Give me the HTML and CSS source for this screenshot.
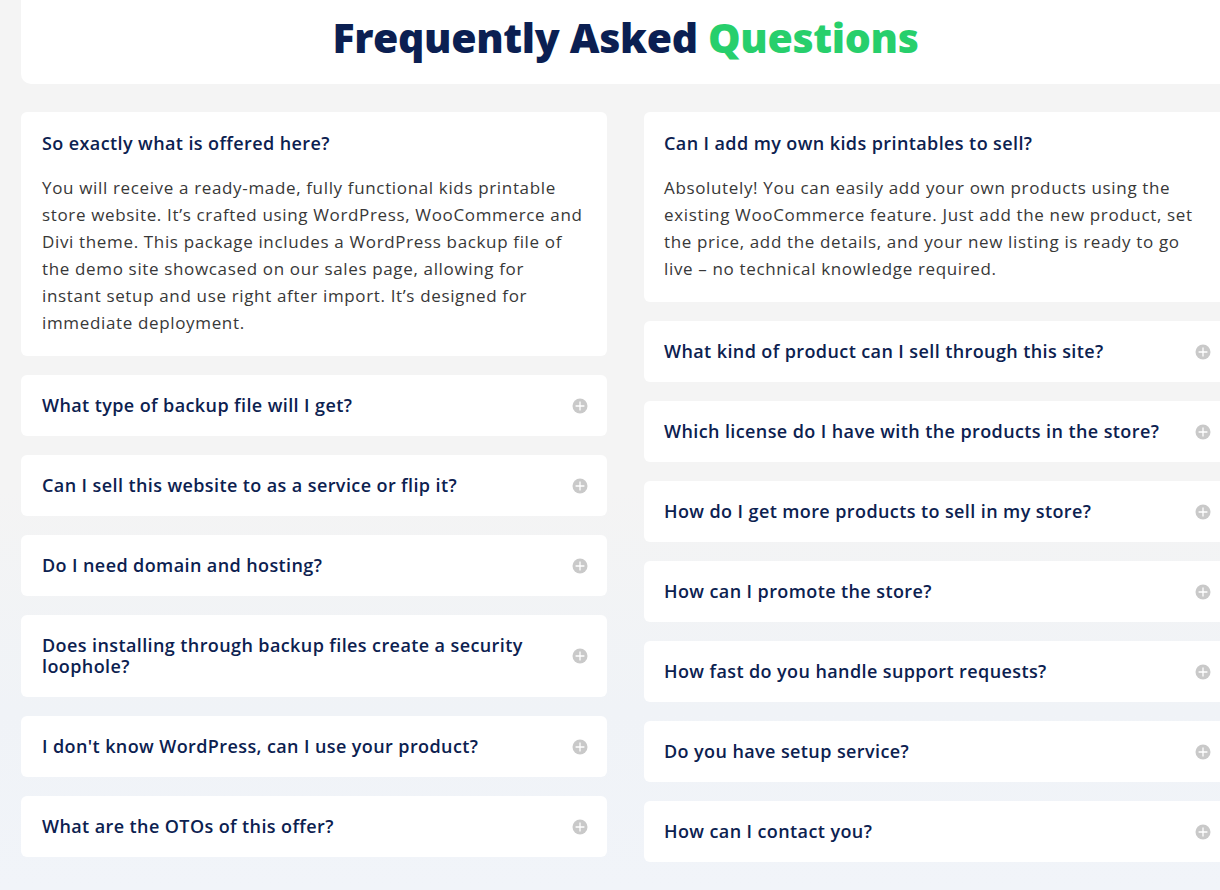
FILE: index.html
```html
<!DOCTYPE html>
<html lang="en">
<head>
<meta charset="utf-8">
<title>FAQ</title>
<link rel="stylesheet" href="styles.css">
</head>
<body>
<div class="page">
  <header class="hero">
    <h1 class="hero-title">Frequently Asked <span class="accent">Questions</span></h1>
  </header>
  <div class="faq-grid">
    <div class="faq-col">
      <div class="card open">
        <h3 class="q">So exactly what is offered here?</h3>
        <p class="a">You will receive a ready-made, fully functional kids printable store website. It’s crafted using WordPress, WooCommerce and Divi theme. This package includes a WordPress backup file of the demo site showcased on our sales page, allowing for instant setup and use right after import. It’s designed for immediate deployment.</p>
      </div>
      <div class="card"><h3 class="q">What type of backup file will I get?</h3><span class="icon"><svg width="16" height="16" viewBox="0 0 16 16"><circle cx="8" cy="8" r="7.5" fill="#c9c9c9"/><path d="M3.6 8h8.8M8 3.6v8.8" stroke="#fff" stroke-width="1.3"/></svg></span></div>
      <div class="card"><h3 class="q">Can I sell this website to as a service or flip it?</h3><span class="icon"><svg width="16" height="16" viewBox="0 0 16 16"><circle cx="8" cy="8" r="7.5" fill="#c9c9c9"/><path d="M3.6 8h8.8M8 3.6v8.8" stroke="#fff" stroke-width="1.3"/></svg></span></div>
      <div class="card"><h3 class="q">Do I need domain and hosting?</h3><span class="icon"><svg width="16" height="16" viewBox="0 0 16 16"><circle cx="8" cy="8" r="7.5" fill="#c9c9c9"/><path d="M3.6 8h8.8M8 3.6v8.8" stroke="#fff" stroke-width="1.3"/></svg></span></div>
      <div class="card"><h3 class="q">Does installing through backup files create a security loophole?</h3><span class="icon"><svg width="16" height="16" viewBox="0 0 16 16"><circle cx="8" cy="8" r="7.5" fill="#c9c9c9"/><path d="M3.6 8h8.8M8 3.6v8.8" stroke="#fff" stroke-width="1.3"/></svg></span></div>
      <div class="card"><h3 class="q">I don't know WordPress, can I use your product?</h3><span class="icon"><svg width="16" height="16" viewBox="0 0 16 16"><circle cx="8" cy="8" r="7.5" fill="#c9c9c9"/><path d="M3.6 8h8.8M8 3.6v8.8" stroke="#fff" stroke-width="1.3"/></svg></span></div>
      <div class="card"><h3 class="q">What are the OTOs of this offer?</h3><span class="icon"><svg width="16" height="16" viewBox="0 0 16 16"><circle cx="8" cy="8" r="7.5" fill="#c9c9c9"/><path d="M3.6 8h8.8M8 3.6v8.8" stroke="#fff" stroke-width="1.3"/></svg></span></div>
    </div>
    <div class="faq-col right">
      <div class="card open">
        <h3 class="q">Can I add my own kids printables to sell?</h3>
        <p class="a">Absolutely! You can easily add your own products using the existing WooCommerce feature. Just add the new product, set the price, add the details, and your new listing is ready to go live – no technical knowledge required.</p>
      </div>
      <div class="card"><h3 class="q">What kind of product can I sell through this site?</h3><span class="icon"><svg width="16" height="16" viewBox="0 0 16 16"><circle cx="8" cy="8" r="7.5" fill="#c9c9c9"/><path d="M3.6 8h8.8M8 3.6v8.8" stroke="#fff" stroke-width="1.3"/></svg></span></div>
      <div class="card"><h3 class="q">Which license do I have with the products in the store?</h3><span class="icon"><svg width="16" height="16" viewBox="0 0 16 16"><circle cx="8" cy="8" r="7.5" fill="#c9c9c9"/><path d="M3.6 8h8.8M8 3.6v8.8" stroke="#fff" stroke-width="1.3"/></svg></span></div>
      <div class="card"><h3 class="q">How do I get more products to sell in my store?</h3><span class="icon"><svg width="16" height="16" viewBox="0 0 16 16"><circle cx="8" cy="8" r="7.5" fill="#c9c9c9"/><path d="M3.6 8h8.8M8 3.6v8.8" stroke="#fff" stroke-width="1.3"/></svg></span></div>
      <div class="card"><h3 class="q">How can I promote the store?</h3><span class="icon"><svg width="16" height="16" viewBox="0 0 16 16"><circle cx="8" cy="8" r="7.5" fill="#c9c9c9"/><path d="M3.6 8h8.8M8 3.6v8.8" stroke="#fff" stroke-width="1.3"/></svg></span></div>
      <div class="card"><h3 class="q">How fast do you handle support requests?</h3><span class="icon"><svg width="16" height="16" viewBox="0 0 16 16"><circle cx="8" cy="8" r="7.5" fill="#c9c9c9"/><path d="M3.6 8h8.8M8 3.6v8.8" stroke="#fff" stroke-width="1.3"/></svg></span></div>
      <div class="card"><h3 class="q">Do you have setup service?</h3><span class="icon"><svg width="16" height="16" viewBox="0 0 16 16"><circle cx="8" cy="8" r="7.5" fill="#c9c9c9"/><path d="M3.6 8h8.8M8 3.6v8.8" stroke="#fff" stroke-width="1.3"/></svg></span></div>
      <div class="card"><h3 class="q">How can I contact you?</h3><span class="icon"><svg width="16" height="16" viewBox="0 0 16 16"><circle cx="8" cy="8" r="7.5" fill="#c9c9c9"/><path d="M3.6 8h8.8M8 3.6v8.8" stroke="#fff" stroke-width="1.3"/></svg></span></div>
    </div>
  </div>
</div>
</body>
</html>
```
FILE: styles.css
```css
html, body {
  margin: 0;
  padding: 0;
  height: 100%;
  overflow: hidden;
}
body {
  background: linear-gradient(180deg, #f4f4f4 0%, #f4f4f4 55%, #f0f3f7 80%, #f1f4f9 100%);
  font-family: "Open Sans", "Liberation Sans", sans-serif;
}
.page {
  width: 1209px;
  margin-left: 21px;
}
.hero {
  background: #fff;
  height: 84px;
  border-radius: 0 0 10px 10px;
  display: flex;
  justify-content: center;
  align-items: flex-start;
}
.hero-title {
  margin: 12px 0 0;
  font-size: 41px;
  line-height: 50px;
  font-weight: 800;
  color: #0b1f52;
  letter-spacing: -0.35px;
}
.accent {
  color: #27cf6c;
}
.faq-grid {
  display: grid;
  grid-template-columns: 586px 586px;
  column-gap: 37px;
  margin-top: 28px;
}
.faq-col {
  display: flex;
  flex-direction: column;
  gap: 19px;
}
.card {
  background: #fff;
  border-radius: 6px;
  padding: 20px 19px 20px 21px;
  display: flex;
  align-items: center;
  justify-content: space-between;
  gap: 30px;
}
.right .card {
  padding-left: 20px;
}
.card.open {
  display: block;
  padding-top: 21px;
  padding-right: 21px;
}
.q {
  margin: 0;
  font-size: 18px;
  line-height: 21px;
  font-weight: 600;
  color: #0c2150;
  letter-spacing: 0.4px;
}
.a {
  margin: 20px 0 0;
  font-size: 17px;
  line-height: 27px;
  color: #383838;
  letter-spacing: 0.65px;
}
.icon {
  flex: 0 0 16px;
  width: 16px;
  height: 16px;
  display: block;
}
.icon svg {
  display: block;
}
```
